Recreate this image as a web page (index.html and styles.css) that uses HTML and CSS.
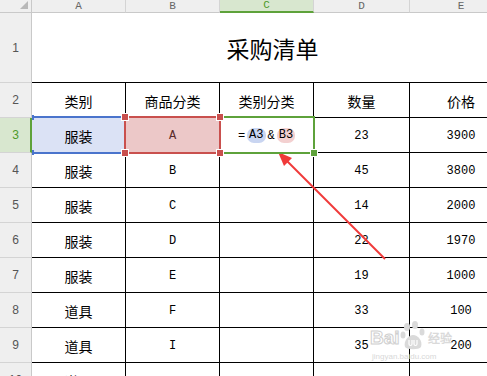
FILE: index.html
```html
<!DOCTYPE html>
<html lang="zh-CN">
<head>
<meta charset="utf-8">
<title>采购清单</title>
<link rel="stylesheet" href="styles.css">
</head>
<body>
<div class="page">
  <div class="sheet">
    <div class="corner"><span class="tri"></span></div>
    <div class="colh">A</div>
    <div class="colh">B</div>
    <div class="colh active">C</div>
    <div class="colh">D</div>
    <div class="colh">E</div>

    <div class="rowh">1</div>
    <div class="title">采购清单</div>

    <div class="rowh">2</div>
    <div class="cell">类别</div>
    <div class="cell">商品分类</div>
    <div class="cell">类别分类</div>
    <div class="cell">数量</div>
    <div class="cell">价格</div>

    <div class="rowh active">3</div>
    <div class="cell sel-a"><span class="ov ov-blue"></span>服装</div>
    <div class="cell num sel-b"><span class="ov ov-red"><i class="h h1"></i><i class="h h2"></i><i class="h h3"></i><i class="h h4"></i></span>A</div>
    <div class="cell num"><span class="ov ov-green"><i class="fill"></i></span><span class="formula"><span>=</span><span class="ref ref-a">A3</span><span>&amp;</span><span class="ref ref-b">B3</span></span></div>
    <div class="cell num">23</div>
    <div class="cell num">3900</div>

    <div class="rowh">4</div>
    <div class="cell">服装</div>
    <div class="cell num">B</div>
    <div class="cell"></div>
    <div class="cell num">45</div>
    <div class="cell num">3800</div>

    <div class="rowh">5</div>
    <div class="cell">服装</div>
    <div class="cell num">C</div>
    <div class="cell"></div>
    <div class="cell num">14</div>
    <div class="cell num">2000</div>

    <div class="rowh">6</div>
    <div class="cell">服装</div>
    <div class="cell num">D</div>
    <div class="cell"></div>
    <div class="cell num">22</div>
    <div class="cell num">1970</div>

    <div class="rowh">7</div>
    <div class="cell">服装</div>
    <div class="cell num">E</div>
    <div class="cell"></div>
    <div class="cell num">19</div>
    <div class="cell num">1000</div>

    <div class="rowh">8</div>
    <div class="cell">道具</div>
    <div class="cell num">F</div>
    <div class="cell"></div>
    <div class="cell num">33</div>
    <div class="cell num">100</div>

    <div class="rowh">9</div>
    <div class="cell">道具</div>
    <div class="cell num">I</div>
    <div class="cell"></div>
    <div class="cell num">35</div>
    <div class="cell num">200</div>

    <div class="rowh">10</div>
    <div class="cell">道具</div>
    <div class="cell num"></div>
    <div class="cell"></div>
    <div class="cell num"></div>
    <div class="cell num"></div>
  </div>

  <svg class="arrow" width="487" height="376" viewBox="0 0 487 376">
    <line x1="385" y1="259" x2="285" y2="159" stroke="#f03a3a" stroke-width="2"/>
    <polygon points="278,152 292,158 284,166" fill="#f03a3a"/>
  </svg>

  <div class="watermark">
    <div class="wm-top">
      <span class="wm-bai">Bai</span>
      <svg class="paw" width="26" height="30" viewBox="0 0 26 30">
        <ellipse cx="7" cy="6" rx="3" ry="4" fill="#dadada"/>
        <ellipse cx="15" cy="4" rx="3" ry="4" fill="#dadada"/>
        <ellipse cx="3" cy="14" rx="2.5" ry="3.5" fill="#dadada"/>
        <ellipse cx="22" cy="11" rx="2.5" ry="3.5" fill="#dadada"/>
        <path d="M5 26 C3 20 9 14 13 14 C18 14 23 20 21 26 C19 29 7 29 5 26 Z" fill="#dadada"/>
        <path d="M9 19 V23 C9 25 12 25 12 23 V19 M14 19 V23 C14 25 17 25 17 23 V19" stroke="#fff" stroke-width="1.2" fill="none"/>
      </svg>
      <span class="wm-cn">经验</span>
    </div>
    <div class="wm-url">jingyan.baidu.com</div>
  </div>
</div>
</body>
</html>
```

FILE: styles.css
```css
html, body {
  margin: 0;
  padding: 0;
  background: #fff;
}

.page {
  position: relative;
  width: 487px;
  height: 376px;
  overflow: hidden;
}

.sheet {
  display: grid;
  grid-template-columns: 32px 94px 94px 94px 96px 103px;
  grid-template-rows: 13px 70px repeat(9, 35px);
  width: 513px;
  font-family: "Noto Sans CJK SC", "Liberation Sans", sans-serif;
  font-size: 14px;
  color: #000;
}

.corner {
  box-sizing: border-box;
  background: #efefef;
  border-right: 1px solid #c9c9c9;
  border-bottom: 1px solid #c9c9c9;
  position: relative;
}

.tri {
  position: absolute;
  left: 20px;
  top: 1px;
  width: 0;
  height: 0;
  border-left: 8px solid transparent;
  border-bottom: 8px solid #b8b8b8;
}

.colh {
  box-sizing: border-box;
  background: #efefef;
  border-right: 1px solid #d4d4d4;
  border-bottom: 1px solid #c9c9c9;
  color: #666;
  font-family: "Liberation Mono", monospace;
  font-size: 11px;
  line-height: 12px;
  text-align: center;
}

.colh.active {
  background: #d8e7cf;
  color: #4e9a2a;
  border-bottom: 2px solid #5ea23b;
  line-height: 11px;
}

.rowh {
  box-sizing: border-box;
  background: #efefef;
  border-right: 1px solid #c9c9c9;
  border-bottom: 1px solid #d4d4d4;
  color: #555;
  font-family: "Liberation Sans", sans-serif;
  font-size: 12px;
  display: flex;
  align-items: center;
  justify-content: center;
}

.rowh.active {
  background: #d8e7cf;
  color: #4e9a2a;
  border-right: 2px solid #5ea23b;
  padding-left: 1px;
}

.title {
  grid-column: 2 / span 5;
  box-sizing: border-box;
  border-bottom: 1px solid #000;
  display: flex;
  align-items: center;
  justify-content: center;
  font-size: 23px;
  padding-top: 1px;
}

.cell {
  box-sizing: border-box;
  border-right: 1px solid #000;
  border-bottom: 1px solid #000;
  display: flex;
  align-items: center;
  justify-content: center;
  position: relative;
  padding-top: 1px;
}

.num {
  font-family: "Liberation Mono", monospace;
  font-size: 12px;
}

.sel-a {
  background: #dbe2f5;
}

.sel-b {
  background: #ecc8c8;
  color: #5a2b2b;
}

.ov {
  position: absolute;
  box-sizing: border-box;
  pointer-events: none;
}

.ov-blue {
  left: 0;
  right: 0;
  top: -2px;
  bottom: -2px;
  border-top: 2px solid #4a74cc;
  border-bottom: 2px solid #4a74cc;
}

.ov-blue::before,
.ov-blue::after {
  content: "";
  position: absolute;
  left: 0;
  width: 2px;
  height: 5px;
  background: #4a74cc;
}

.ov-blue::before { top: -3px; }
.ov-blue::after { bottom: -3px; }

.ov-red {
  left: -2px;
  right: -2px;
  top: -2px;
  bottom: -2px;
  border: 2px solid #c9504e;
  z-index: 2;
}

.h {
  position: absolute;
  width: 6px;
  height: 6px;
  background: #c9504e;
  box-shadow: 0 0 0 1px #fff;
}

.h1 { left: -4px; top: -4px; }
.h2 { right: -4px; top: -4px; }
.h3 { left: -4px; bottom: -4px; }
.h4 { right: -4px; bottom: -4px; }

.ov-green {
  left: 0;
  right: -2px;
  top: -2px;
  bottom: -2px;
  border-top: 2px solid #5ea23b;
  border-right: 2px solid #5ea23b;
  border-bottom: 2px solid #5ea23b;
  z-index: 1;
}

.fill {
  position: absolute;
  right: -4px;
  bottom: -4px;
  width: 6px;
  height: 6px;
  background: #5ea23b;
  box-shadow: 0 0 0 1px #fff;
}

.formula {
  display: flex;
  align-items: center;
  gap: 2px;
  font-family: "Liberation Mono", monospace;
  font-size: 12px;
  white-space: pre;
}

.ref {
  border-radius: 7px;
  padding: 1px 2px;
  line-height: 13px;
}

.ref-a { background: #c9d5f1; }
.ref-b { background: #f3d0d0; }

.arrow {
  position: absolute;
  left: 0;
  top: 0;
  pointer-events: none;
}

.watermark {
  position: absolute;
  left: 370px;
  top: 321px;
  width: 90px;
  pointer-events: none;
  color: #d4d4d4;
}

.wm-top {
  display: flex;
  align-items: flex-end;
  height: 31px;
}

.wm-bai {
  font-family: "Liberation Sans", sans-serif;
  font-weight: bold;
  font-size: 19px;
  line-height: 20px;
  margin-bottom: 4px;
  -webkit-text-stroke: 1px #cfcfcf;
  color: transparent;
}

.paw {
  display: block;
  margin-bottom: 1px;
}

.wm-cn {
  font-size: 12px;
  line-height: 16px;
  font-weight: bold;
  margin-left: 2px;
  margin-bottom: 5px;
  color: #dadada;
}

.wm-url {
  font-family: "Liberation Sans", sans-serif;
  font-size: 8px;
  line-height: 9px;
  color: #d8d8d8;
  padding-left: 2px;
}
```
